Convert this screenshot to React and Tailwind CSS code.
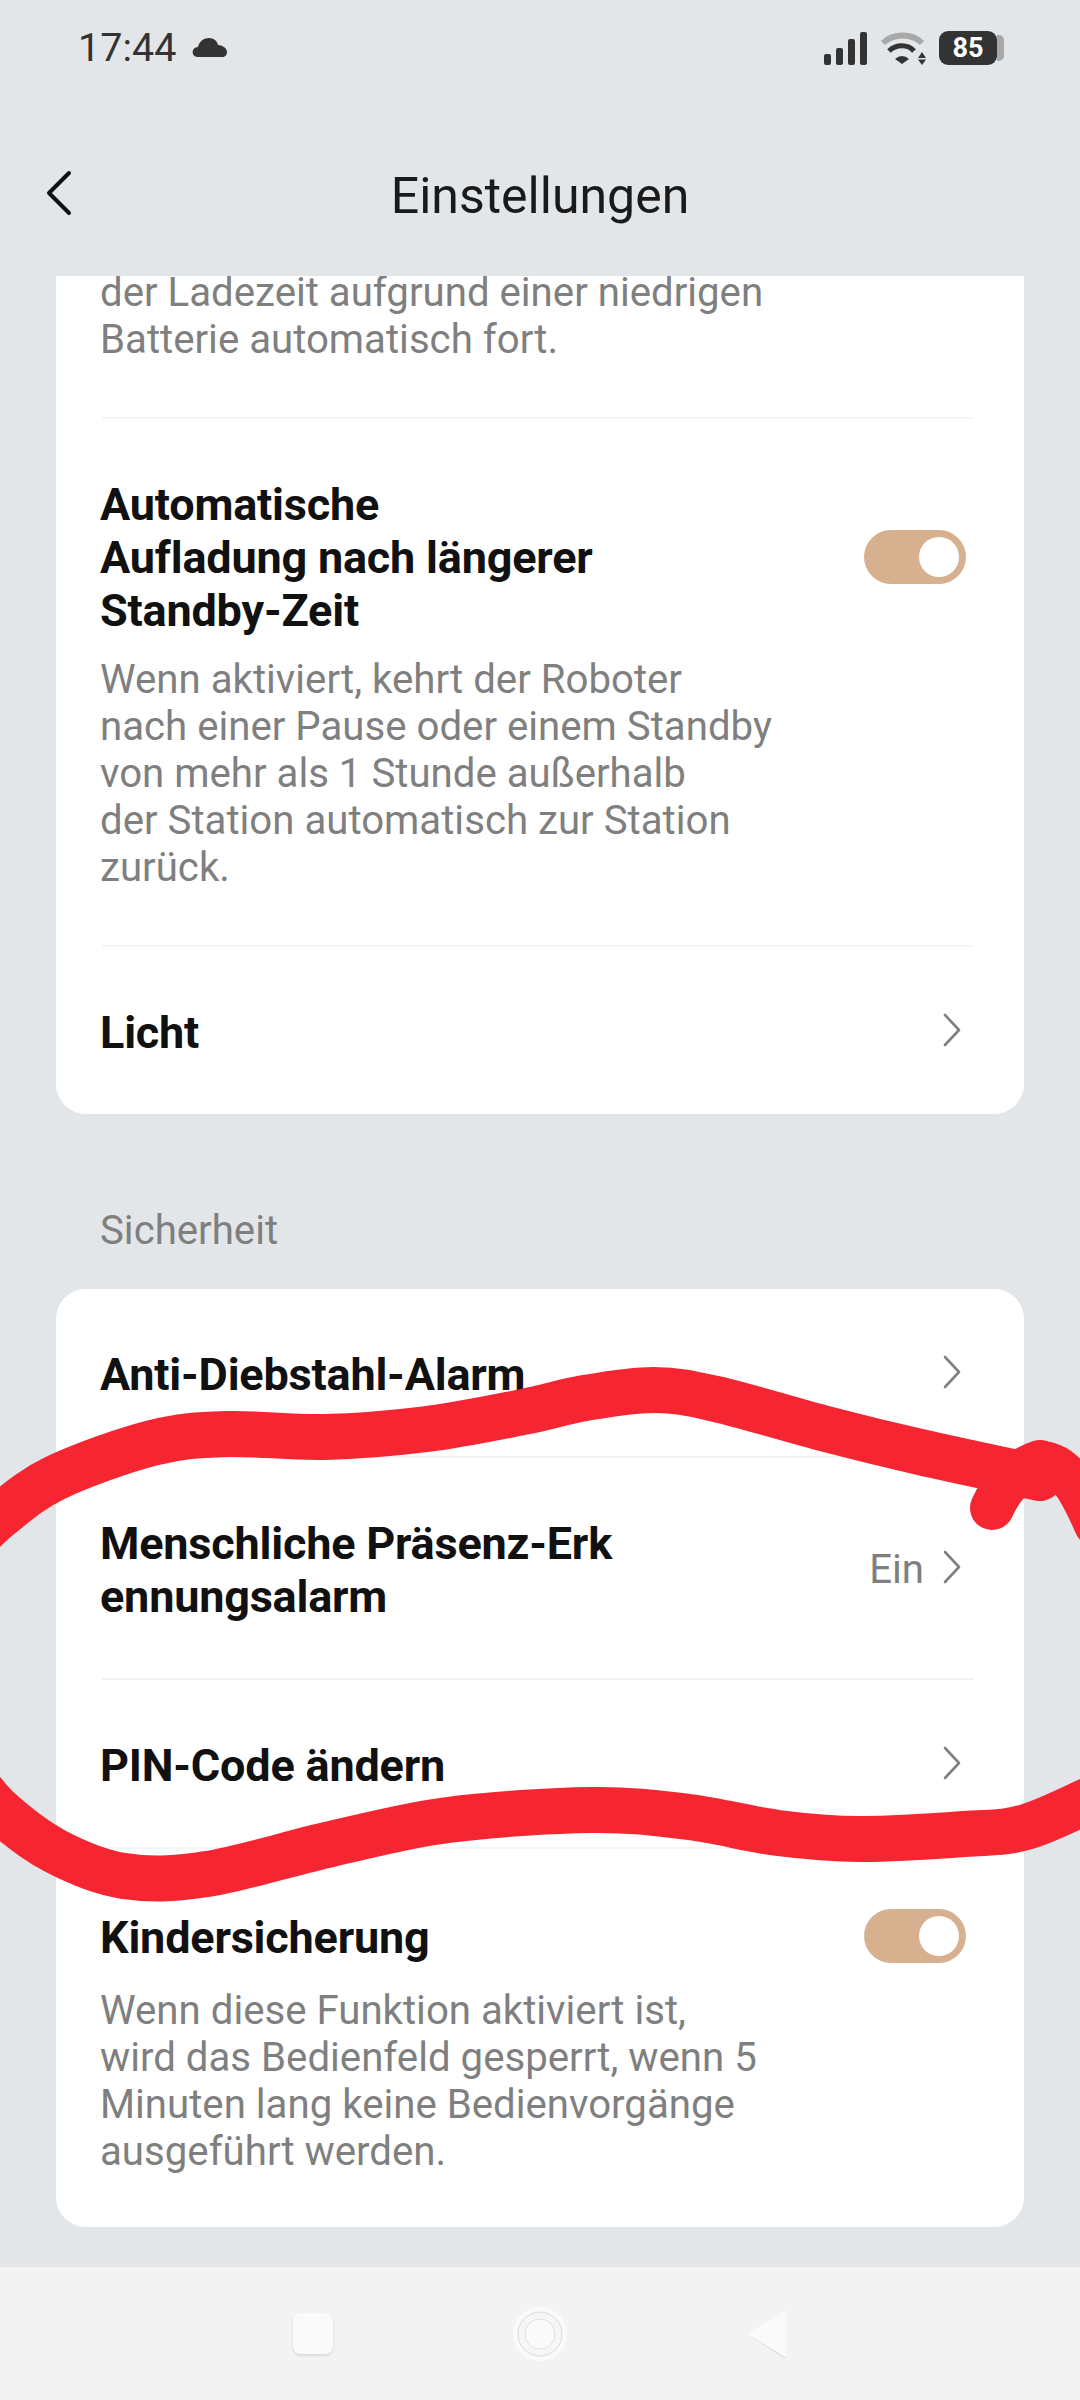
const smooth = (p) => {
  let d = `M${p[0][0]} ${p[0][1]}`;
  for (let i = 0; i < p.length - 1; i++) {
    const a = p[i - 1] || p[i], b = p[i], c = p[i + 1], e = p[i + 2] || c;
    d += ` C${b[0] + (c[0] - a[0]) / 6} ${b[1] + (c[1] - a[1]) / 6} ${c[0] - (e[0] - b[0]) / 6} ${c[1] - (e[1] - b[1]) / 6} ${c[0]} ${c[1]}`;
  }
  return d;
};

const top = [[-30,1545],[0,1516],[55,1478],[152,1443],[227,1434],[324,1437],[427,1429],[523,1412],[585,1398],[654,1390],[716,1399],[826,1429],[920,1452],[1040,1478]];
const bottom = [[-30,1775],[0,1811],[55,1851],[124,1876],[207,1874],[331,1844],[448,1820],[592,1810],[689,1817],[778,1833],[861,1839],[964,1834],[1026,1827],[1100,1795]];

function Chevron() {
  return (
    <svg width="20" height="34" viewBox="0 0 20 34" fill="none" className="shrink-0 mb-[5px]">
      <path d="M3 2 L17 17 L3 32" stroke="#808080" strokeWidth="2.6" strokeLinecap="round" strokeLinejoin="round" />
    </svg>
  );
}

function Toggle() {
  return (
    <div className="w-[102px] h-[54px] rounded-full bg-[#d6b08f] flex items-center justify-end pr-[7px] shrink-0 mb-[2px]">
      <div className="w-[40px] h-[40px] rounded-full bg-white" />
    </div>
  );
}

const Divider = () => <div className="h-[2px] bg-[#f3f4f5] ml-[2px]" />;

function Title({ children, className = "" }) {
  return <div className={`text-[45px] leading-[53px] font-bold text-[#111] tracking-[-0.2px] ${className}`}>{children}</div>;
}

function Desc({ children, className = "" }) {
  return <div className={`text-[40.2px] leading-[47px] text-[#7f7f7f] whitespace-nowrap ${className}`}>{children}</div>;
}

function LinkRow({ children, height, value, pad = "pt-[4px]" }) {
  return (
    <div className={`flex items-center justify-between pr-[12px] ${pad} ${height}`}>
      <Title>{children}</Title>
      <div className="flex items-center gap-[18px]">
        {value && <span className="text-[40.2px] text-[#7f7f7f]">{value}</span>}
        <Chevron />
      </div>
    </div>
  );
}

export default function App() {
  return (
    <div className="relative w-[1080px] h-[2400px] overflow-hidden bg-[#e3e6e9] font-['Roboto',sans-serif] flex flex-col">
      {/* status bar */}
      <div className="h-[96px] flex items-center justify-between pl-[78px] pr-[76px] shrink-0">
        <div className="flex items-center gap-[16px]">
          <span className="text-[39.5px] text-[#333]">17:44</span>
          <svg width="36" height="20" viewBox="0 0 36 20" fill="#333">
            <path d="M6 19 C1 19 0 15 1 12 C2 10 4 9 6 9 C7 4 11 0 17 0 C22 0 25 3 26 7 C30 7 35 10 35 14 C35 17 33 19 30 19 Z" />
          </svg>
        </div>
        <div className="flex items-center gap-[12px]">
          <svg width="44" height="34" viewBox="0 0 44 34" fill="#333">
            <rect x="0" y="23" width="7" height="11" rx="2" />
            <rect x="12" y="17" width="7" height="17" rx="2" />
            <rect x="24" y="8" width="7" height="26" rx="2" />
            <rect x="36" y="1" width="7" height="33" rx="2" />
          </svg>
          <svg width="47" height="36" viewBox="0 0 47 36" fill="none">
            <path d="M3 13 C13 3 32 3 42 13" stroke="#a8a8a8" strokeWidth="6" />
            <path d="M9 21 C16 14 28 14 34 21" stroke="#333" strokeWidth="5" />
            <path d="M15 29 Q22 23 29 29 L22 34 Z" fill="#333" />
            <path d="M38 28 L42 22 L46 28 Z M38 29.5 L46 29.5 L42 35 Z" fill="#333" />
          </svg>
          <div className="flex items-center">
            <div className="w-[58px] h-[34px] rounded-[9px] bg-[#333] text-white text-[27px] font-bold flex items-center justify-center">85</div>
            <div className="w-[7px] h-[26px] rounded-r-[5px] bg-[#a8a8a8]" />
          </div>
        </div>
      </div>
      {/* header */}
      <div className="relative h-[180px] flex items-center justify-center pt-[20px] shrink-0">
        <svg width="28" height="46" viewBox="0 0 28 46" fill="none" className="absolute left-[45px] top-[74px]">
          <path d="M24 3 L4 23 L24 43" stroke="#111" strokeWidth="4" strokeLinecap="round" strokeLinejoin="round" />
        </svg>
        <span className="text-[50px] text-[#1a1a1a]">Einstellungen</span>
      </div>

      {/* content */}
      <div className="px-[56px] flex flex-col">
        <div className="bg-white rounded-b-[30px] h-[838px] pl-[44px] pr-[50px] overflow-hidden">
          <Desc className="-mt-[7px]">der Ladezeit aufgrund einer niedrigen<br />Batterie automatisch fort.</Desc>
          <div className="mt-[54px]"><Divider /></div>
          <div className="pt-[59px] h-[526px]">
            <div className="flex items-center justify-between pr-[8px]">
              <Title>Automatische<br />Aufladung nach längerer<br />Standby-Zeit</Title>
              <Toggle />
            </div>
            <Desc className="mt-[19px]">Wenn aktiviert, kehrt der Roboter<br />nach einer Pause oder einem Standby<br />von mehr als 1 Stunde außerhalb<br />der Station automatisch zur Station<br />zurück.</Desc>
          </div>
          <Divider />
          <LinkRow height="h-[170px]" pad="pt-[0px]">Licht</LinkRow>
        </div>

        <div className="text-[40.2px] leading-[47px] text-[#7f7f7f] pl-[44px] mt-[93px] mb-[35px]">Sicherheit</div>

        <div className="bg-white rounded-[30px] h-[938px] pl-[44px] pr-[50px]">
          <LinkRow height="h-[167px]">Anti-Diebstahl-Alarm</LinkRow>
          <Divider />
          <LinkRow height="h-[220px]" value="Ein">Menschliche Präsenz-Erk<br />ennungsalarm</LinkRow>
          <Divider />
          <LinkRow height="h-[167px]">PIN-Code ändern</LinkRow>
          <Divider />
          <div className="pt-[60px]">
            <div className="flex items-center justify-between pr-[8px]">
              <Title>Kindersicherung</Title>
              <Toggle />
            </div>
            <Desc className="mt-[22px]">Wenn diese Funktion aktiviert ist,<br />wird das Bedienfeld gesperrt, wenn 5<br />Minuten lang keine Bedienvorgänge<br />ausgeführt werden.</Desc>
          </div>
        </div>
      </div>

      {/* nav bar */}
      <div className="mt-auto h-[133px] bg-[#f3f3f3] relative flex items-center justify-center gap-[178px] shrink-0">
        <div className="w-[40px] h-[41px] rounded-[8px] bg-[#fafafa] shadow-[0_2px_3px_#d8d8d8] ml-[2px]" />
        <svg width="58" height="58" viewBox="0 0 58 58" fill="none">
          <circle cx="29" cy="29" r="25" fill="#f6f6f6" stroke="#fafafa" strokeWidth="4" />
          <circle cx="29" cy="29" r="22" fill="none" stroke="#dcdcdc" strokeWidth="1" />
          <circle cx="29" cy="29" r="15" fill="#fafafa" stroke="#e2e2e2" strokeWidth="1" />
        </svg>
        <svg width="42" height="50" viewBox="0 0 42 50" fill="none">
          <path d="M38 3 L2 25 L38 48 Z" fill="#d8d8d8" transform="translate(0 1.5)" />
          <path d="M38 2 L2 25 L38 47 Z" fill="#fafafa" stroke="#fafafa" strokeWidth="2" strokeLinejoin="round" />
        </svg>
      </div>

      {/* red marker annotation over the screenshot */}
      <svg className="absolute inset-0" width="1080" height="2400" viewBox="0 0 1080 2400" fill="none">
        <path d={smooth(top)} stroke="#f52632" strokeWidth="46" strokeLinecap="round" strokeLinejoin="round" />
        <path d={smooth(bottom)} stroke="#f52632" strokeWidth="46" strokeLinecap="round" strokeLinejoin="round" />
        <path d="M1040 1462 C1015 1470 1000 1490 992 1508" stroke="#f52632" strokeWidth="44" strokeLinecap="round" />
        <path d="M1040 1462 C1065 1462 1080 1490 1095 1525" stroke="#f52632" strokeWidth="42" strokeLinecap="round" />
      </svg>
    </div>
  );
}
